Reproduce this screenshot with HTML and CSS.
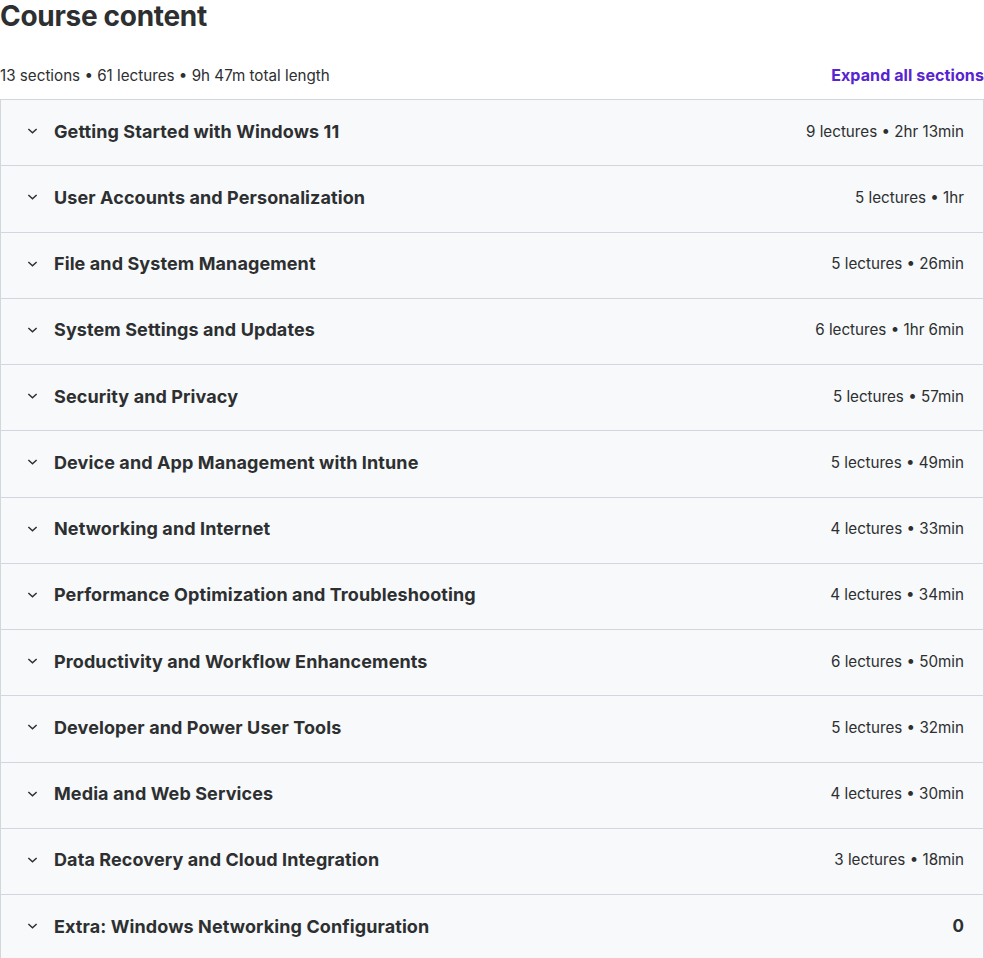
FILE: index.html
```html
<!DOCTYPE html>
<html>
<head>
<meta charset="utf-8">
<link rel="stylesheet" href="styles.css">
</head>
<body>
<div class="page">
  <h2 class="title">Course content</h2>
  <div class="summary">
    <span class="meta">13 sections • 61 lectures • 9h 47m total length</span>
    <button class="expand">Expand all sections</button>
  </div>
  <div class="panel">
    <div class="row"><span class="chev"><svg viewBox="0 0 12 8" width="11" height="8"><path d="M1.5 1.8 6 6 10.5 1.8" fill="none" stroke="#2d2f31" stroke-width="1.6"/></svg></span><span class="name">Getting Started with Windows 11</span><span class="info">9 lectures • 2hr 13min</span></div>
    <div class="row"><span class="chev"><svg viewBox="0 0 12 8" width="11" height="8"><path d="M1.5 1.8 6 6 10.5 1.8" fill="none" stroke="#2d2f31" stroke-width="1.6"/></svg></span><span class="name">User Accounts and Personalization</span><span class="info">5 lectures • 1hr</span></div>
    <div class="row"><span class="chev"><svg viewBox="0 0 12 8" width="11" height="8"><path d="M1.5 1.8 6 6 10.5 1.8" fill="none" stroke="#2d2f31" stroke-width="1.6"/></svg></span><span class="name">File and System Management</span><span class="info">5 lectures • 26min</span></div>
    <div class="row"><span class="chev"><svg viewBox="0 0 12 8" width="11" height="8"><path d="M1.5 1.8 6 6 10.5 1.8" fill="none" stroke="#2d2f31" stroke-width="1.6"/></svg></span><span class="name">System Settings and Updates</span><span class="info">6 lectures • 1hr 6min</span></div>
    <div class="row"><span class="chev"><svg viewBox="0 0 12 8" width="11" height="8"><path d="M1.5 1.8 6 6 10.5 1.8" fill="none" stroke="#2d2f31" stroke-width="1.6"/></svg></span><span class="name">Security and Privacy</span><span class="info">5 lectures • 57min</span></div>
    <div class="row"><span class="chev"><svg viewBox="0 0 12 8" width="11" height="8"><path d="M1.5 1.8 6 6 10.5 1.8" fill="none" stroke="#2d2f31" stroke-width="1.6"/></svg></span><span class="name">Device and App Management with Intune</span><span class="info">5 lectures • 49min</span></div>
    <div class="row"><span class="chev"><svg viewBox="0 0 12 8" width="11" height="8"><path d="M1.5 1.8 6 6 10.5 1.8" fill="none" stroke="#2d2f31" stroke-width="1.6"/></svg></span><span class="name">Networking and Internet</span><span class="info">4 lectures • 33min</span></div>
    <div class="row"><span class="chev"><svg viewBox="0 0 12 8" width="11" height="8"><path d="M1.5 1.8 6 6 10.5 1.8" fill="none" stroke="#2d2f31" stroke-width="1.6"/></svg></span><span class="name">Performance Optimization and Troubleshooting</span><span class="info">4 lectures • 34min</span></div>
    <div class="row"><span class="chev"><svg viewBox="0 0 12 8" width="11" height="8"><path d="M1.5 1.8 6 6 10.5 1.8" fill="none" stroke="#2d2f31" stroke-width="1.6"/></svg></span><span class="name">Productivity and Workflow Enhancements</span><span class="info">6 lectures • 50min</span></div>
    <div class="row"><span class="chev"><svg viewBox="0 0 12 8" width="11" height="8"><path d="M1.5 1.8 6 6 10.5 1.8" fill="none" stroke="#2d2f31" stroke-width="1.6"/></svg></span><span class="name">Developer and Power User Tools</span><span class="info">5 lectures • 32min</span></div>
    <div class="row"><span class="chev"><svg viewBox="0 0 12 8" width="11" height="8"><path d="M1.5 1.8 6 6 10.5 1.8" fill="none" stroke="#2d2f31" stroke-width="1.6"/></svg></span><span class="name">Media and Web Services</span><span class="info">4 lectures • 30min</span></div>
    <div class="row"><span class="chev"><svg viewBox="0 0 12 8" width="11" height="8"><path d="M1.5 1.8 6 6 10.5 1.8" fill="none" stroke="#2d2f31" stroke-width="1.6"/></svg></span><span class="name">Data Recovery and Cloud Integration</span><span class="info">3 lectures • 18min</span></div>
    <div class="row"><span class="chev"><svg viewBox="0 0 12 8" width="11" height="8"><path d="M1.5 1.8 6 6 10.5 1.8" fill="none" stroke="#2d2f31" stroke-width="1.6"/></svg></span><span class="name">Extra: Windows Networking Configuration</span><span class="info strong">0</span></div>
  </div>
</div>
</body>
</html>
```
FILE: styles.css
```css
html, body { margin: 0; padding: 0; background: #fff; }
body { font-family: Inter, "Noto Sans", sans-serif; color: #2d2f31; }
.page { width: 984px; }
.title { margin: 0; padding-top: 1px; font-size: 28px; font-weight: 700; line-height: 30px; letter-spacing: -0.3px; color: #2d2f31; }
.summary { display: flex; justify-content: space-between; align-items: center; margin-top: 29px; height: 30px; margin-bottom: 9px; }
.meta { font-size: 15.2px; color: #2d2f31; }
.expand { border: 0; background: none; padding: 0; font-family: inherit; font-size: 16px; font-weight: 700; color: #5624d0; letter-spacing: 0.1px; }
.panel { border: 1px solid #d1d7dc; border-bottom: 0; }
.row { display: flex; align-items: center; box-sizing: border-box; height: 66.25px; background: #f7f9fa; border-bottom: 1px solid #d1d7dc; padding: 0 19px 3px 26px; }
.chev { display: flex; width: 27px; }
.name { flex: 1; font-size: 18px; font-weight: 700; letter-spacing: 0.1px; }
.info { font-size: 15.2px; color: #2d2f31; }
.info.strong { font-weight: 700; font-size: 17px; }
```
